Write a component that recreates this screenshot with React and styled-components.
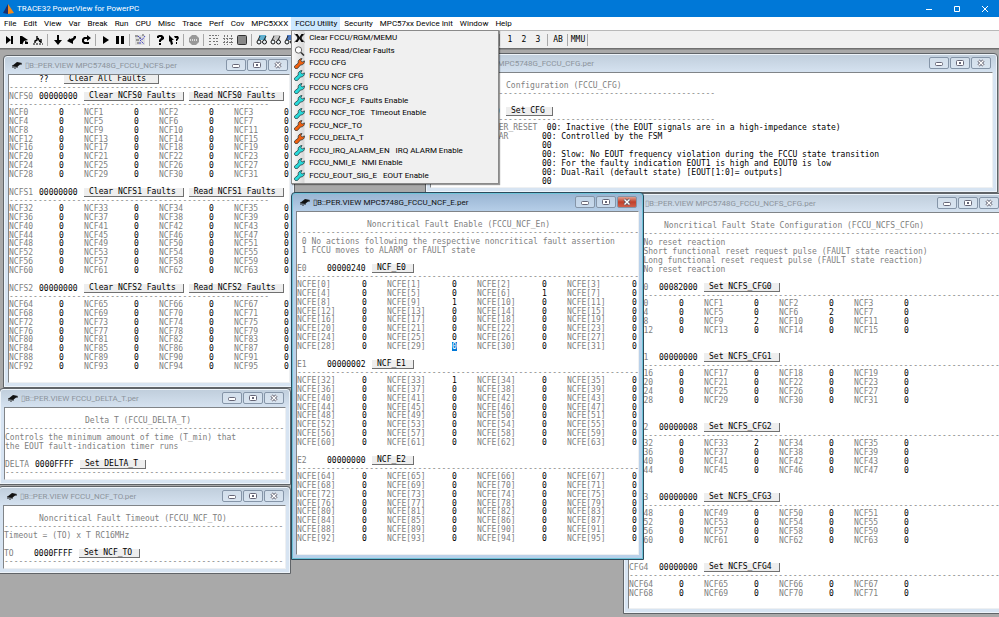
import React from "react";
import styled, { createGlobalStyle, css } from "styled-components";

const rule = (n) => "-".repeat(n);

const MENUS = [
  "File", "Edit", "View", "Var", "Break", "Run", "CPU", "Misc", "Trace", "Perf", "Cov", "MPC5XXX",
  "FCCU Utility", "Security", "MPC57xx Device Init", "Window", "Help",
];

const MENU_ITEMS = [
  { icon: "cross", label: "Clear FCCU/RGM/MEMU" },
  { icon: "lens", label: "FCCU Read/Clear Faults" },
  { icon: "orange", label: "FCCU CFG" },
  { icon: "teal", label: "FCCU NCF CFG" },
  { icon: "teal", label: "FCCU NCFS CFG" },
  { icon: "teal", label: "FCCU NCF_E   Faults Enable" },
  { icon: "teal", label: "FCCU NCF_TOE   Timeout Enable" },
  { icon: "orange", label: "FCCU_NCF_TO" },
  { icon: "orange", label: "FCCU_DELTA_T" },
  { icon: "teal", label: "FCCU_IRQ_ALARM_EN   IRQ ALARM Enable" },
  { icon: "teal", label: "FCCU_NMI_E   NMI Enable" },
  { icon: "teal", label: "FCCU_EOUT_SIG_E   EOUT Enable" },
];

const TOOLBAR = [
  ["stepInto", "stepOver", "diverge"],
  ["down", "check", "back"],
  ["go", "pause"],
  ["config"],
  ["help", "pointer"],
  ["stop"],
  ["list", "grid", "chip"],
  ["glasses", "glassesGrey", "glassesBlue", "glasses"],
  ["glasses", "list", "grid", "chip"],
  ["glasses", "list", "grid", "chip"],
  ["glasses", "list", "grid", "filter"],
  ["1", "2", "3"],
  ["AB"],
  ["MMU"],
];

const CFG_ROWS = [
  ["FCCU_SET_AFTER_RESET", " 00: Inactive (the EOUT signals are in a high-impedance state)"],
  ["FCCU_SET_CLEAR", "00: Controlled by the FSM"],
  ["OD", "00"],
  ["SM", "00: Slow: No EOUT frequency violation during the FCCU state transition"],
  ["PS", "00: For the faulty indication EOUT1 is high and EOUT0 is low"],
  ["FOM", "00: Dual-Rail (default state) [EOUT[1:0]= outputs]"],
  ["FOP", "00"],
];

const glasses = (tint) => (
  <>
    <path d="M3 1h7v5H3z" fill={tint} />
    <path d="M2 6l2-4M8 6l2-4" stroke="#222" fill="none" />
    <circle cx="3" cy="8" r="2" fill="#eef6fa" stroke="#111" />
    <circle cx="8.5" cy="8" r="2" fill="#eef6fa" stroke="#111" />
  </>
);

const GLYPHS = {
  stepInto: <path d="M2 2v8l5-4zM7 2h2v8H7z" />,
  stepOver: <path d="M2 2h2v8H2zM4 2l6 4-4 1-2 4zM7 7l3 1v2H7z" />,
  diverge: (
    <>
      <path d="M1 10h10" stroke="#000" strokeDasharray="2 1" />
      <path d="M3 9V7l2-1V2M6 4l2 4M9 5v4" stroke="#000" strokeWidth="1.4" fill="none" />
    </>
  ),
  down: <path d="M5 1h2v5h3l-4 5-4-5h3z" />,
  check: <path d="M10 2v2L7 7v3L1 7l3-3v1l3-1 1-2z" />,
  back: <path d="M9 10H4L2 8V5l2-2h3V1l4 3-4 3V5H5L4 6v1l1 1h4z" />,
  go: <path d="M3 2l6 4-6 4z" />,
  pause: <path d="M2 2h3v8H2zM7 2h3v8H7z" />,
  config: (
    <>
      <path d="M1 1h10v10H1z" fill="#dcdcdc" />
      <path d="M1 2h3M5 4h2M2 6h3M3 9h2M8 1h2" stroke="#555" />
      <path d="M4 2l4 4 3-4M6 6l4 4M5 9h3" stroke="#4545c8" strokeDasharray="2 1" fill="none" />
    </>
  ),
  help: <path d="M3 2l2-1h3l2 2v2L7 7v1H5V6l2-2V3H5v1H3zM5 9h2v2H5z" />,
  pointer: <path d="M1 1l5 5H4l1 4-2 1-1-4-1 1zM6 2h4l1 2-2 3H8V5l1-1H7zM8 8h1v2H8z" />,
  stop: (
    <>
      <path d="M4 1h4l3 3v4l-3 3H4L1 8V4z" fill="#999" />
      <path d="M2 6h8" stroke="#ddd" strokeWidth="2" strokeDasharray="1 1" />
    </>
  ),
  list: (
    <path d="M1 1.5h10M1 10.5h3M1 4.5h2M5 4.5h6M1 7.5h2M5 7.5h5M6 10.5h4" stroke="#777" strokeDasharray="2 1" />
  ),
  grid: <path d="M2.5 1v10M5.5 1v10M9.5 1v10M1 4.5h10M1 8.5h10" stroke="#777" strokeDasharray="2 1" />,
  chip: <rect x="1.5" y="1.5" width="9" height="9" rx="1" fill="#888" stroke="#333" />,
  glasses: glasses("#5fb0d0"),
  glassesGrey: glasses("#c4c4c4"),
  glassesBlue: glasses("#4a78c0"),
  filter: <path d="M1 3h10L7 7v3H5V7z" />,
};

function ToolGlyph({ name }) {
  if (!GLYPHS[name]) return name;
  return (
    <svg width="12" height="12" viewBox="0 0 12 12" aria-hidden="true">
      {GLYPHS[name]}
    </svg>
  );
}

function MenuIcon({ kind }) {
  if (kind === "cross") {
    return (
      <svg width="10" height="10" viewBox="0 0 10 10" aria-hidden="true">
        <path d="M1 1h2l2 3 2-3h2L7 5l2 4H7L5 6 3 9H1l2-4z" />
        <path d="M0 1l10 8M10 1L0 9" stroke="#222" />
      </svg>
    );
  }
  if (kind === "lens") {
    return (
      <svg width="10" height="10" viewBox="0 0 10 10" fill="none" aria-hidden="true">
        <circle cx="4" cy="4" r="3.2" fill="#fff" stroke="#666" />
        <path d="M6.5 6.5l3 3" stroke="#333" strokeWidth="1.6" />
      </svg>
    );
  }
  return (
    <svg width="11" height="11" viewBox="0 0 11 11" aria-hidden="true">
      <path
        d="M.4 8.2l3.8-3.1C3.7 2.7 5.4.6 8 .5L6.8 2.6l1.4 1.3 2.3-1c.1 2.6-1.6 4.3-4 4.1l-3 3.4C1.7 11.2-.2 9.9.4 8.2z"
        fill={kind === "orange" ? "#f06010" : "#28dada"}
        stroke="#1b2d30"
        strokeWidth="0.7"
      />
    </svg>
  );
}

function Registers({ prefix, suffix = "", start, rows, labelWidth, values = {}, selected }) {
  return (
    <RegisterTable $width={(labelWidth + 25) * 4} $height={rows === 8 ? 70 : rows === 4 ? 35 : 18}>
      <tbody>
        {Array.from({ length: rows }, (_, r) => (
          <tr key={r}>
            {[0, 1, 2, 3].map((c) => {
              const n = start + r * 4 + c;
              return (
                <React.Fragment key={n}>
                  <NameCell $width={labelWidth}>{prefix + n + suffix}</NameCell>
                  <ValueCell>
                    <Digit $selected={selected === n}>{values[n] || 0}</Digit>
                  </ValueCell>
                </React.Fragment>
              );
            })}
          </tr>
        ))}
      </tbody>
    </RegisterTable>
  );
}

function Header({ name, value, actions }) {
  return (
    <HeaderLine>
      <HeaderName>{name}</HeaderName>
      <HeaderValue>{value}</HeaderValue>
      {actions.map((a) => (
        <PushButton key={a}>{a}</PushButton>
      ))}
    </HeaderLine>
  );
}

function PerWindow({ title, active, children, ...place }) {
  return (
    <Frame $active={active} $place={place}>
      <Caption $active={active}>
        <svg width="10" height="8" viewBox="0 0 10 8" aria-hidden="true">
          <path d="M0 5l5-4 5 1-5 4z" fill="#111" />
          <path d="M1 4v3M3 5v3M5 5v2M9 2v2" stroke="#222" />
        </svg>
        <CaptionText>{title}</CaptionText>
        <CaptionButton aria-label="Minimize">
          <svg width="8" height="8" viewBox="0 0 8 8">
            <rect x="0.5" y="3.5" width="7" height="3" rx="1" fill="#fff" stroke="#667" />
          </svg>
        </CaptionButton>
        <CaptionButton aria-label="Maximize">
          <svg width="8" height="8" viewBox="0 0 8 8">
            <rect x="0.5" y="1.5" width="7" height="5" rx="1" fill="#fff" stroke="#667" />
            <rect x="3" y="3" width="2" height="2" fill="#667" />
          </svg>
        </CaptionButton>
        <CaptionButton aria-label="Close" $close={active}>
          <svg width="8" height="8" viewBox="0 0 8 8" fill="none">
            <path d="M1.5 1.5l5 5M6.5 1.5l-5 5" stroke="#556" strokeWidth="3" />
            <path d="M1.5 1.5l5 5M6.5 1.5l-5 5" stroke="#fff" strokeWidth="1.4" />
          </svg>
        </CaptionButton>
      </Caption>
      <Pane>{children}</Pane>
    </Frame>
  );
}

export default function App() {
  return (
    <Shell>
      <GlobalStyle />
      <TitleBar>
        <svg width="12" height="10" viewBox="0 0 12 10" aria-hidden="true">
          <path d="M5 0L0 9l5 1z" fill="#1b2f6b" />
          <path d="M5 0v10l6-1z" fill="#f28a1c" />
        </svg>
        <AppName>TRACE32 PowerView for PowerPC</AppName>
        <SystemButton aria-label="Minimize">
          <svg width="8" height="8" viewBox="0 0 8 8"><path d="M1 4.5h6" stroke="#fff" /></svg>
        </SystemButton>
        <SystemButton aria-label="Maximize">
          <svg width="8" height="8" viewBox="0 0 8 8"><path d="M1.5 1.5h5v5h-5z" fill="none" stroke="#fff" /></svg>
        </SystemButton>
        <SystemButton aria-label="Close">
          <svg width="8" height="8" viewBox="0 0 8 8"><path d="M1 1l6 6M7 1L1 7" stroke="#fff" /></svg>
        </SystemButton>
      </TitleBar>

      <MenuBar>
        {MENUS.map((name) => (
          <MenuSlot key={name}>
            <MenuButton $open={name === "FCCU Utility"}>{name}</MenuButton>
            {name === "FCCU Utility" && (
              <DropDown>
                {MENU_ITEMS.map((item) => (
                  <DropItem key={item.label}>
                    <MenuIcon kind={item.icon} />
                    {item.label}
                  </DropItem>
                ))}
              </DropDown>
            )}
          </MenuSlot>
        ))}
      </MenuBar>

      <ToolBar>
        {TOOLBAR.map((group, i) => (
          <ToolGroup key={i}>
            {group.map((name, j) => (
              <ToolButton key={j} aria-label={name}>
                <ToolGlyph name={name} />
              </ToolButton>
            ))}
          </ToolGroup>
        ))}
      </ToolBar>

      <Desktop>
        <PerWindow title="▯B::PER.VIEW MPC5748G_FCCU_NCFS.per" x={3} y={5} width={292} height={333}>
          <Line>
            <Unknown>??</Unknown>
            <PushButton>{"Clear All Faults "}</PushButton>
          </Line>
          <Rule>{rule(54)}</Rule>
          {[0, 1, 2].map((n) => (
            <Block key={n} $gap={9}>
              <Header
                name={`NCFS${n}`}
                value="00000000"
                actions={[`Clear NCFS${n} Faults`, `Read NCFS${n} Faults`]}
              />
              <Rule>{rule(54)}</Rule>
              <Registers prefix="NCF" start={n * 32} rows={8} labelWidth={50} />
            </Block>
          ))}
        </PerWindow>

        <PerWindow title="▯B::PER.VIEW MPC5748G_FCCU_CFG.per" x={425} y={3} width={573} height={140}>
          <Title $chars={15}>Configuration (FCCU_CFG)</Title>
          <Block $gap={9}>
            <Rule>{rule(59)}</Rule>
          </Block>
          <Header name="CFG" value="00000000" actions={["Set CFG"]} />
          <Rule>{rule(59)}</Rule>
          <FieldTable>
            <tbody>
              {CFG_ROWS.map(([name, text]) => (
                <tr key={name}>
                  <FieldName>{name}</FieldName>
                  <FieldText>{text}</FieldText>
                </tr>
              ))}
            </tbody>
          </FieldTable>
        </PerWindow>

        <PerWindow title="▯B::PER.VIEW MPC5748G_FCCU_NCFS_CFG.per" x={623} y={143} width={383} height={421}>
          <Title $chars={7}>Noncritical Fault State Configuration (FCCU_NCFS_CFGn)</Title>
          <Rule>{rule(77)}</Rule>
          <Block $gap={9}>
            <Line>00 No reset reaction</Line>
            <Line>01 Short functional reset request pulse (FAULT state reaction)</Line>
            <Line>10 Long functional reset request pulse (FAULT state reaction)</Line>
            <Line>11 No reset reaction</Line>
          </Block>
          {["00082000", "00000000", "00000008", "00000000", "00000000"].map((value, n) => (
            <Block key={n} $gap={18}>
              <Header name={`CFG${n}`} value={value} actions={[`Set NCFS_CFG${n}`]} />
              <Rule>{rule(77)}</Rule>
              <Registers
                prefix="NCF"
                start={n * 16}
                rows={n === 4 ? 2 : 4}
                labelWidth={50}
                values={{ 6: 2, 9: 2, 33: 2 }}
              />
            </Block>
          ))}
        </PerWindow>

        <PerWindow title="▯B::PER.VIEW FCCU_DELTA_T.per" x={-1} y={338} width={292} height={97}>
          <Title $chars={16}>Delta T (FCCU_DELTA_T)</Title>
          <Rule>{rule(58)}</Rule>
          <Block $gap={9}>
            <Line>Controls the minimum amount of time (T_min) that</Line>
            <Line>the EOUT fault-indication timer runs</Line>
          </Block>
          <Header name="DELTA" value="0000FFFF" actions={["Set DELTA_T"]} />
          <Rule>{rule(58)}</Rule>
        </PerWindow>

        <PerWindow title="▯B::PER.VIEW FCCU_NCF_TO.per" x={-2} y={436} width={293} height={88}>
          <Title $chars={7}>Noncritical Fault Timeout (FCCU_NCF_TO)</Title>
          <Rule>{rule(58)}</Rule>
          <Block $gap={9}>
            <Line>Timeout = (TO) x T RC16MHz</Line>
          </Block>
          <Header name="TO" value="0000FFFF" actions={["Set NCF_TO"]} />
          <Rule>{rule(58)}</Rule>
        </PerWindow>

        <PerWindow title="▯B::PER.VIEW MPC5748G_FCCU_NCF_E.per" active x={291} y={142} width={353} height={368}>
          <Title $chars={14}>Noncritical Fault Enable (FCCU_NCF_En)</Title>
          <Rule>{rule(71)}</Rule>
          <Block $gap={9}>
            <Line>{" 0 No actions following the respective noncritical fault assertion"}</Line>
            <Line>{" 1 FCCU moves to ALARM or FAULT state"}</Line>
          </Block>
          {["00000240", "00000002", "00000000"].map((value, n) => (
            <Block key={n} $gap={9}>
              <Header name={`E${n}`} value={value} actions={[`NCF_E${n}`]} />
              <Rule>{rule(71)}</Rule>
              <Registers
                prefix="NCFE["
                suffix="]"
                start={n * 32}
                rows={8}
                labelWidth={65}
                values={{ 6: 1, 9: 1, 33: 1 }}
                selected={29}
              />
            </Block>
          ))}
        </PerWindow>
      </Desktop>
    </Shell>
  );
}

const GlobalStyle = createGlobalStyle`
  body {
    margin: 0;
    overflow: hidden;
  }

  button {
    border: 0;
    padding: 0;
    background: none;
    font: inherit;
    color: inherit;
  }

  svg {
    flex: none;
  }
`;

const Shell = styled.div`
  display: flex;
  flex-direction: column;
  height: 100vh;
  color: #000;
  font-family: Roboto, "Open Sans", sans-serif;
  font-size: 8px;
`;

const TitleBar = styled.header`
  display: flex;
  align-items: center;
  height: 17px;
  padding-left: 3px;
  background: #0078d7;
  color: #fff;
`;

const AppName = styled.span`
  flex: 1;
  padding-left: 2px;
`;

const SystemButton = styled.button`
  display: flex;
  align-items: center;
  justify-content: center;
  width: 28px;
  height: 17px;
`;

const MenuBar = styled.nav`
  display: flex;
  height: 13px;
  background: #fff;
  border-bottom: 1px solid #b8b8b8;
`;

const MenuSlot = styled.div`
  position: relative;
  display: flex;
`;

const MenuButton = styled.button`
  padding: 0 3px 0 4px;
  line-height: 13px;
  white-space: nowrap;
  background: ${(p) => (p.$open ? "#cce8ff" : "transparent")};
`;

const DropDown = styled.div`
  position: absolute;
  z-index: 10;
  top: 13px;
  left: 0;
  display: grid;
  grid-auto-rows: 1fr;
  width: 206px;
  height: 150px;
  padding: 1px 0;
  border: 1px solid #8a8a8a;
  background: linear-gradient(90deg, #fafafa, #d8d8d8 12px, #f0f0f0 13px);
  box-shadow: 1px 1px 1px rgba(0, 0, 0, 0.4);
`;

const DropItem = styled.button`
  display: flex;
  align-items: center;
  gap: 4px;
  padding-left: 2px;
  line-height: 12px;
  text-align: left;
  white-space: pre;

  svg {
    width: 11px;
  }
`;

const ToolBar = styled.div`
  display: flex;
  align-items: center;
  height: 17px;
  padding-left: 3px;
  background: #f0f0f0;
  border-bottom: 1px solid #707070;
`;

const ToolGroup = styled.div`
  display: flex;

  &::after {
    content: "";
    width: 1px;
    margin: 0 3px 0 2px;
    background: #a8a8a8;
  }
`;

const ToolButton = styled.button`
  display: flex;
  align-items: center;
  justify-content: center;
  width: 14px;
  height: 12px;
  font-family: "DejaVu Sans Mono", monospace;
`;

const Desktop = styled.main`
  position: relative;
  flex: 1;
  overflow: hidden;
  background: #a9a9a9;
  border-top: 1px solid #8c8c8c;
`;

const Frame = styled.section`
  position: absolute;
  left: ${(p) => p.$place.x}px;
  top: ${(p) => p.$place.y}px;
  display: flex;
  flex-direction: column;
  box-sizing: border-box;
  width: ${(p) => p.$place.width}px;
  height: ${(p) => p.$place.height}px;
  padding: 0 4px 4px;
  border: 1px solid ${(p) => (p.$active ? "#2b4a5c" : "#606468")};
  border-radius: 4px 4px 0 0;
  background: ${(p) =>
    p.$active ? "linear-gradient(#98b4d2, #b9d1ea 20px, #b9d1ea)" : "linear-gradient(#bfcddb, #d7e4f2 20px, #d7e4f2)"};
  box-shadow: inset 0 0 0 1px ${(p) => (p.$active ? "#6fc3d8" : "#eef4fa")};
`;

const Caption = styled.div`
  display: flex;
  align-items: center;
  flex: none;
  gap: 1px;
  height: 18px;
  padding: 0 2px 0 4px;
  color: ${(p) => (p.$active ? "#111" : "#8c949c")};
`;

const CaptionText = styled.span`
  flex: 1;
  padding-left: 2px;
  white-space: nowrap;
`;

const CaptionButton = styled.button`
  display: flex;
  align-items: center;
  justify-content: center;
  width: 20px;
  height: 12px;
  border: 1px solid #8595a8;
  border-radius: 2px;
  background: ${(p) => (p.$close ? "linear-gradient(#e0a090, #c0402c 50%, #d0604c)" : "rgba(225, 235, 246, 0.5)")};
`;

const Pane = styled.div`
  flex: 1;
  overflow: hidden;
  border: 1px solid #eef0f2;
  border-top-color: #808488;
  border-left-color: #808488;
  background: #fff;
  color: #808080;
  font-family: "DejaVu Sans Mono", monospace;
  line-height: 9px;
  white-space: pre;
`;

const Line = styled.div`
  display: flex;
  height: 9px;
`;

const Title = styled.div`
  height: 9px;
  padding: 8px 0 0 ${(p) => p.$chars * 5}px;
`;

const Rule = styled.div`
  height: 8px;
  line-height: 8px;
  overflow: hidden;
`;

const Block = styled.div`
  padding-bottom: ${(p) => p.$gap}px;
`;

const Unknown = styled.span`
  width: 25px;
  padding-left: 30px;
  color: #000;
`;

const HeaderLine = styled.div`
  display: flex;
  height: 9px;
`;

const HeaderName = styled.span`
  width: 30px;
`;

const HeaderValue = styled.span`
  width: 45px;
  color: #000;
`;

const PushButton = styled.button`
  height: 9px;
  margin-right: 5px;
  padding: 0 7px 0 5px;
  border-right: 1px solid #707070;
  border-bottom: 1px solid #707070;
  background: #eee;
  color: #000;
  line-height: 8px;
  white-space: pre;
`;

const RegisterTable = styled.table`
  width: ${(p) => p.$width}px;
  height: ${(p) => p.$height}px;
  border-collapse: collapse;
  table-layout: fixed;
  line-height: 8px;

  td {
    padding: 0;
  }
`;

const NameCell = styled.td`
  width: ${(p) => p.$width}px;
`;

const ValueCell = styled.td`
  width: 25px;
  color: #000;
`;

const Digit = styled.span`
  ${(p) =>
    p.$selected &&
    css`
      background: #0078d7;
      color: #fff;
    `}
`;

const FieldTable = styled.table`
  height: 62px;
  margin-left: 10px;
  border-collapse: collapse;
  line-height: 8px;

  td {
    padding: 0;
  }
`;

const FieldName = styled.td`
  width: 101px;
`;

const FieldText = styled.td`
  color: #000;
`;
